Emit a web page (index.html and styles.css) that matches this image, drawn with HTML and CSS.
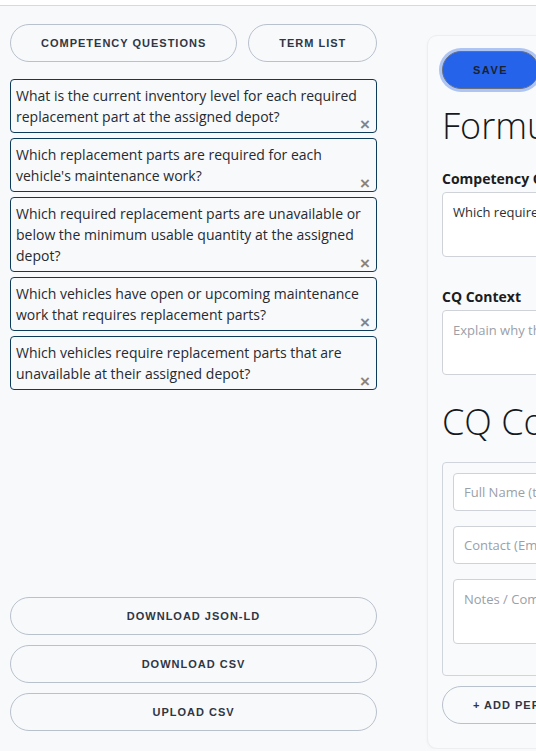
FILE: index.html
```html
<!DOCTYPE html>
<html lang="en">
<head>
    <meta charset="UTF-8">
    <title>CQ Editor</title>
    <link rel="stylesheet" href="styles.css">
</head>
<body>
    <div class="topbar"></div>
    <div class="main">
        <div class="sidebar">
            <div class="tabs">
                <button class="pill-btn">Competency Questions</button>
                <button class="pill-btn">Term List</button>
            </div>

            <div class="cq-list">
                <div class="cq-item">What is the current inventory level for each required replacement part at the assigned depot?<span class="cq-remove">&times;</span></div>
                <div class="cq-item">Which replacement parts are required for each vehicle's maintenance work?<span class="cq-remove">&times;</span></div>
                <div class="cq-item">Which required replacement parts are unavailable or below the minimum usable quantity at the assigned depot?<span class="cq-remove">&times;</span></div>
                <div class="cq-item">Which vehicles have open or upcoming maintenance work that requires replacement parts?<span class="cq-remove">&times;</span></div>
                <div class="cq-item">Which vehicles require replacement parts that are unavailable at their assigned depot?<span class="cq-remove">&times;</span></div>
            </div>

            <div class="actions">
                <button class="pill-btn wide">Download JSON-LD</button>
                <button class="pill-btn wide">Download CSV</button>
                <button class="pill-btn wide">Upload CSV</button>
            </div>
        </div>

        <div class="editor">
            <button class="save-btn">Save</button>
            <h1>Formulate Competency Question</h1>

            <label class="field-label">Competency Question</label>
            <textarea class="field">Which required replacement parts are unavailable or below the minimum usable quantity at the assigned depot?</textarea>

            <label class="field-label context-label">CQ Context</label>
            <textarea class="field" placeholder="Explain why this question matters"></textarea>

            <h1 class="contrib-title">CQ Contributors</h1>

            <div class="person-box">
                <input class="field input" placeholder="Full Name (this person)">
                <input class="field input" placeholder="Contact (Email)">
                <textarea class="field" placeholder="Notes / Comments"></textarea>
            </div>

            <button class="pill-btn add-btn">+ Add Person</button>
        </div>
    </div>
</body>
</html>
```

FILE: styles.css
```css
html, body {
    margin: 0;
    overflow: hidden;
}

body {
    background: #f8f9fb;
    font-family: "Open Sans", "Noto Sans", sans-serif;
    color: #222;
}

.topbar {
    height: 5px;
    background: #fff;
    border-bottom: 1px solid #d6d9de;
}

.main {
    display: flex;
    gap: 50px;
    padding: 18px 0 0 10px;
}

.sidebar {
    flex: 0 0 367px;
    min-width: 0;
    display: flex;
    flex-direction: column;
    padding-bottom: 18px;
}

.tabs {
    display: flex;
    gap: 11px;
}

.pill-btn {
    flex: none;
    height: 38px;
    padding: 0 30px;
    background: transparent;
    border: 1px solid #b9c1cd;
    border-radius: 999px;
    font-family: "Liberation Sans", Arial, sans-serif;
    font-size: 11px;
    font-weight: bold;
    letter-spacing: 1px;
    text-transform: uppercase;
    white-space: nowrap;
    color: #2f3644;
    cursor: pointer;
}

.cq-list {
    display: flex;
    flex-direction: column;
    gap: 5px;
    margin-top: 17px;
}

.cq-item {
    position: relative;
    padding: 5px 8px 5px 5px;
    border: 1px solid #0e3b5a;
    border-radius: 4px;
    font-size: 14px;
    line-height: 21px;
    color: #262a31;
}

.cq-remove {
    position: absolute;
    right: 6px;
    bottom: -1px;
    font-family: "Liberation Sans", Arial, sans-serif;
    font-size: 17px;
    font-weight: bold;
    line-height: 17px;
    color: #858585;
}

.actions {
    margin-top: auto;
    display: flex;
    flex-direction: column;
    gap: 10px;
}

.wide {
    width: 100%;
}

.editor {
    flex: 0 0 760px;
    margin-top: 11px;
    padding: 15px 14px 24px;
    background: #f9fafb;
    border: 1px solid #eceef2;
    border-radius: 10px;
    box-shadow: 0 1px 3px rgba(0, 0, 0, 0.04);
}

.save-btn {
    height: 38px;
    padding: 0 30px;
    background: #2563eb;
    border: 1px solid #687080;
    border-radius: 999px;
    box-shadow: 0 0 0 3px #aec4f3;
    font-family: "Liberation Sans", Arial, sans-serif;
    font-size: 11px;
    font-weight: bold;
    letter-spacing: 1.5px;
    text-transform: uppercase;
    color: #1b2130;
}

h1 {
    margin: 12px 0 0;
    font-size: 36px;
    font-weight: 300;
    line-height: 50px;
    white-space: nowrap;
    color: #15181d;
}

.field-label {
    display: block;
    margin: 18px 0 4px;
    font-size: 14px;
    font-weight: bold;
    color: #1a1d22;
    white-space: nowrap;
}

.context-label {
    margin-top: 30px;
}

.field {
    display: block;
    box-sizing: border-box;
    width: 100%;
    height: 65px;
    padding: 10px;
    background: #fff;
    border: 1px solid #cfd3d9;
    border-radius: 4px;
    font-family: "Open Sans", "Noto Sans", sans-serif;
    font-size: 13px;
    color: #2a2e35;
    resize: none;
}

.field::placeholder {
    color: #9aa0a8;
}

.input {
    height: 38px;
}

.contrib-title {
    margin-top: 22px;
}

.person-box {
    display: flex;
    flex-direction: column;
    gap: 15px;
    margin-top: 15px;
    padding: 10px 10px 31px;
    border: 1px solid #d0d5dd;
    border-radius: 4px;
}

.add-btn {
    margin-top: 10px;
    padding: 0 30px;
    width: 200px;
    text-align: left;
}
```
